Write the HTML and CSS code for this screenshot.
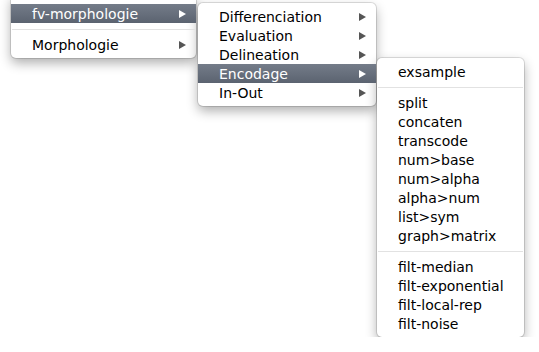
FILE: index.html
```html
<!DOCTYPE html>
<html lang="fr">
<head>
  <meta charset="UTF-8">
  <title>Menus</title>
  <link rel="stylesheet" href="styles.css">
</head>
<body>
  <div class="cascade">
    <ul class="menu menu-root">
      <li class="item active has-sub">fv-morphologie</li>
      <li class="sep"></li>
      <li class="item has-sub">Morphologie</li>
    </ul>

    <ul class="menu menu-sub">
      <li class="item has-sub">Differenciation</li>
      <li class="item has-sub">Evaluation</li>
      <li class="item has-sub">Delineation</li>
      <li class="item active has-sub">Encodage</li>
      <li class="item has-sub">In-Out</li>
    </ul>

    <ul class="menu menu-leaf">
      <li class="item">exsample</li>
      <li class="sep"></li>
      <li class="item">split</li>
      <li class="item">concaten</li>
      <li class="item">transcode</li>
      <li class="item">num&gt;base</li>
      <li class="item">num&gt;alpha</li>
      <li class="item">alpha&gt;num</li>
      <li class="item">list&gt;sym</li>
      <li class="item">graph&gt;matrix</li>
      <li class="sep"></li>
      <li class="item">filt-median</li>
      <li class="item">filt-exponential</li>
      <li class="item">filt-local-rep</li>
      <li class="item">filt-noise</li>
    </ul>
  </div>
</body>
</html>
```

FILE: styles.css
```css
body {
  margin: 0;
  padding: 0;
  background-color: #fff;
  font-family: "DejaVu Sans", sans-serif;
  font-size: 14px;
  overflow: hidden;
}

.cascade {
  display: flex;
  align-items: flex-start;
  padding-left: 11px;
}

.menu {
  list-style: none;
  margin: 0;
  padding: 4px 0;
  background-color: #fff;
  border-radius: 5px;
  box-shadow: 0 0 0 1px rgba(0,0,0,0.12), 0 5px 12px rgba(0,0,0,0.32);
}

.menu-root {
  width: 185px;
  margin-top: -6px;
  padding-top: 10px;
}

.menu-sub {
  width: 178px;
  margin-top: 3px;
  margin-left: 2px;
}

.menu-leaf {
  width: 147px;
  margin-top: 58px;
  margin-left: 1px;
}

.item {
  position: relative;
  box-sizing: border-box;
  height: 19px;
  line-height: 19px;
  padding-top: 1px;
  padding-left: 21px;
  color: #000;
  white-space: nowrap;
}

.item.active {
  color: #fff;
  background: linear-gradient(#747c89, #5b6370);
}

/* triangle des sous-menus */
.has-sub::after {
  content: "";
  position: absolute;
  right: 10px;
  top: 6px;
  border-left: 7px solid #555;
  border-top: 4.5px solid transparent;
  border-bottom: 4.5px solid transparent;
}

.has-sub.active::after {
  border-left-color: #fff;
}

.sep {
  height: 12px;
  position: relative;
}

.sep::before {
  content: "";
  position: absolute;
  left: 1px;
  right: 1px;
  top: 6px;
  border-top: 1px solid #e2e2e2;
}
```
